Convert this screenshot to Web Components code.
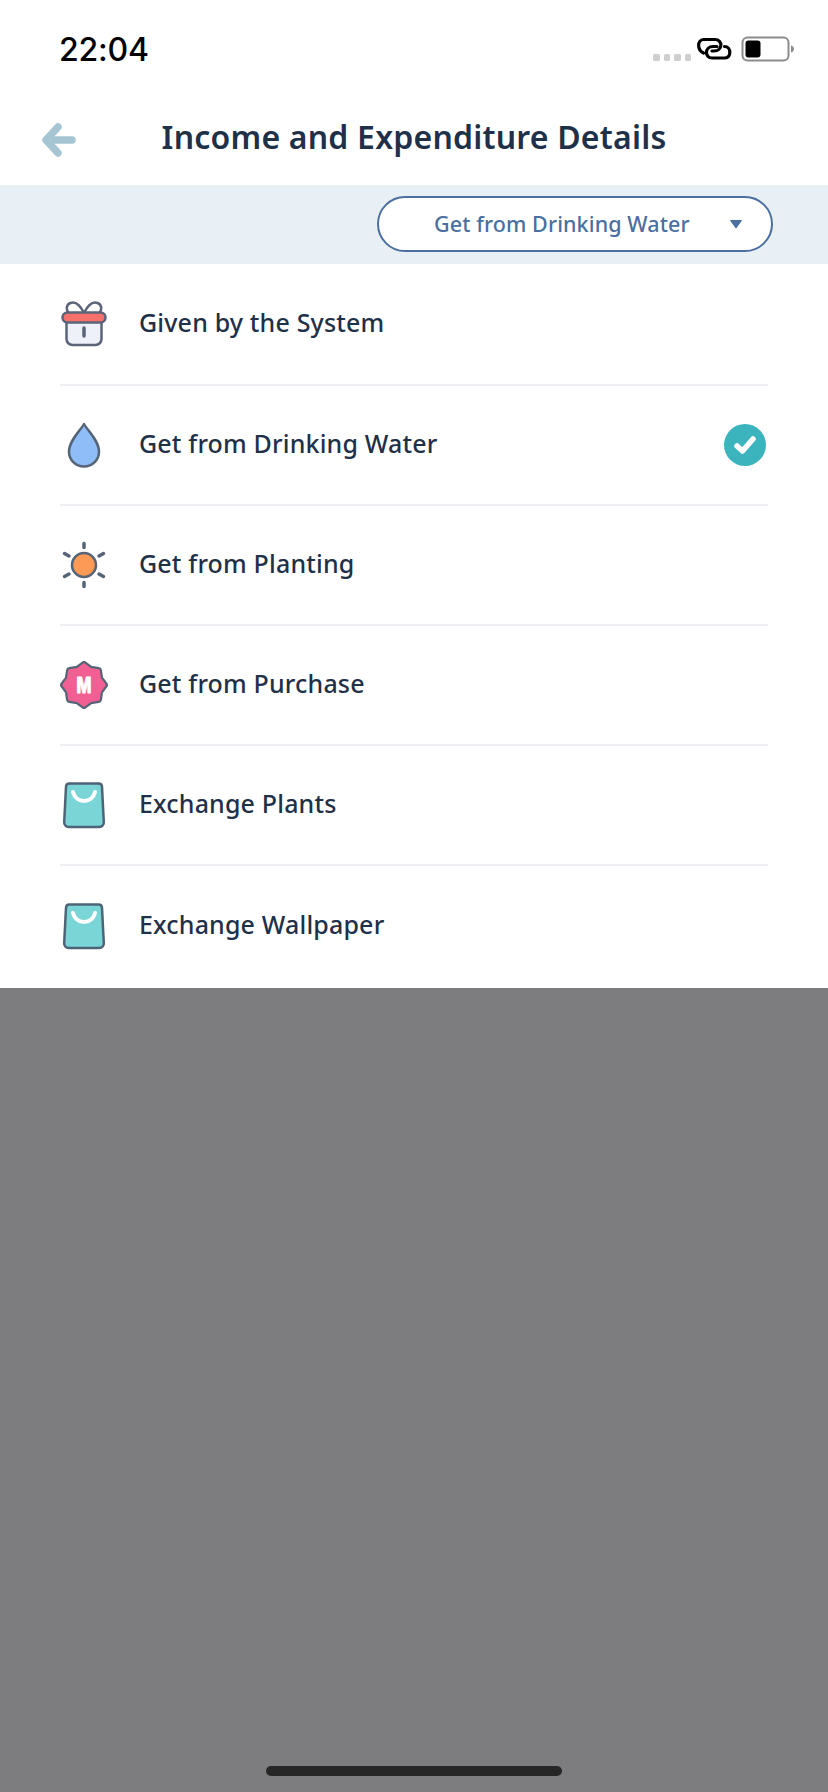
<!DOCTYPE html>
<html>
<head>
<meta charset="utf-8">
<title>Income and Expenditure Details</title>
<style>
  html, body { margin: 0; padding: 0; height: 100%; }
  body { font-family: "Noto Sans", sans-serif; background: #fff; }
</style>
</head>
<body>
<app-screen>
  <status-bar slot="top" time="22:04"></status-bar>
  <nav-header slot="top">Income and Expenditure Details</nav-header>
  <filter-bar slot="top">Get from Drinking Water</filter-bar>

  <ledger-row slot="top">
    <svg slot="icon" width="48" height="48" viewBox="0 0 48 48">
      <path d="M24 13C20 5 15 1.500 10.500 3C6 4.500 6 9.500 8.500 13M24 13C28 5 33 1.500 37.500 3C42 4.500 42 9.500 39.500 13" fill="#fff" stroke="#5b6478" stroke-width="2.500"/>
      <path d="M6.500 20V39a6 6 0 0 0 6 6h23a6 6 0 0 0 6-6V20z" fill="#eef0fa" stroke="#5b6478" stroke-width="2.500"/>
      <rect x="2.500" y="12.500" width="43" height="10" rx="5" fill="#f8706a" stroke="#5b6478" stroke-width="2.500"/>
      <path d="M24 28v8" stroke="#5b6478" stroke-width="3.500" stroke-linecap="round"/>
    </svg>
    Given by the System
  </ledger-row>
  <ledger-row slot="top" checked>
    <svg slot="icon" width="48" height="48" viewBox="0 0 48 48">
      <path d="M24 3C20 10 9 20 9 30.500C9 39 15.500 45.500 24 45.500S39 39 39 30.500C39 20 28 10 24 3z" fill="#8fbdf7" stroke="#566478" stroke-width="2.500" stroke-linejoin="round"/>
    </svg>
    Get from Drinking Water
  </ledger-row>
  <ledger-row slot="top">
    <svg slot="icon" width="48" height="48" viewBox="0 0 48 48">
      <circle cx="24" cy="24" r="12" fill="#fd9a55" stroke="#566478" stroke-width="2.500"/>
      <path d="M24 2.500v4M24 41.500v4M4.500 12.500l4.500 2.500M43.500 12.500l-4.500 2.500M4.500 35.500l4.500-2.500M43.500 35.500l-4.500-2.500" stroke="#566478" stroke-width="3.500" stroke-linecap="round"/>
    </svg>
    Get from Planting
  </ledger-row>
  <ledger-row slot="top">
    <svg slot="icon" width="48" height="48" viewBox="0 0 48 48">
      <polygon points="24,3.500 30.500,8.300 38.500,9.500 39.700,17.500 44.500,24 39.700,30.500 38.500,38.500 30.500,39.700 24,44.500 17.500,39.700 9.500,38.500 8.300,30.500 3.500,24 8.300,17.500 9.500,9.500 17.500,8.300" fill="#566478" stroke="#566478" stroke-width="7" stroke-linejoin="round"/>
      <polygon points="24,3.500 30.500,8.300 38.500,9.500 39.700,17.500 44.500,24 39.700,30.500 38.500,38.500 30.500,39.700 24,44.500 17.500,39.700 9.500,38.500 8.300,30.500 3.500,24 8.300,17.500 9.500,9.500 17.500,8.300" fill="#f25f93" stroke="#f25f93" stroke-width="2.500" stroke-linejoin="round"/>
      <text x="24" y="32" text-anchor="middle" font-family="Inter, sans-serif" font-weight="800" font-size="21" textLength="15" lengthAdjust="spacingAndGlyphs" fill="#fff" stroke="#fff" stroke-width="0.900" stroke-linejoin="round">M</text>
    </svg>
    Get from Purchase
  </ledger-row>
  <ledger-row slot="top">
    <svg slot="icon" width="48" height="48" viewBox="0 0 48 48">
      <path d="M9.500 2.500H38.500a3.500 3.500 0 0 1 3.500 3.300L43.800 41a4.500 4.500 0 0 1-4.500 5H8.700a4.500 4.500 0 0 1-4.500-5L6 5.800A3.500 3.500 0 0 1 9.500 2.500z" fill="#7ad5d6" stroke="#4d6478" stroke-width="2.500" stroke-linejoin="round"/>
      <path d="M13 11C16 23 32 23 35 11" fill="none" stroke="#fff" stroke-width="4" stroke-linecap="round"/>
    </svg>
    Exchange Plants
  </ledger-row>
  <ledger-row slot="top" last>
    <svg slot="icon" width="48" height="48" viewBox="0 0 48 48">
      <path d="M9.500 2.500H38.500a3.500 3.500 0 0 1 3.500 3.300L43.800 41a4.500 4.500 0 0 1-4.500 5H8.700a4.500 4.500 0 0 1-4.500-5L6 5.800A3.500 3.500 0 0 1 9.500 2.500z" fill="#7ad5d6" stroke="#4d6478" stroke-width="2.500" stroke-linejoin="round"/>
      <path d="M13 11C16 23 32 23 35 11" fill="none" stroke="#fff" stroke-width="4" stroke-linecap="round"/>
    </svg>
    Exchange Wallpaper
  </ledger-row>
</app-screen>

<script>
// page shell: white sheet on top, dimmed part with the home bar below
class AppScreen extends HTMLElement {
  constructor() {
    super();
    const shadowRoot = this.attachShadow({mode: 'open'});
    shadowRoot.innerHTML = `
      <style>
        :host { display: flex; flex-direction: column; height: 1792px; width: 828px; }
        .sheet { display: flex; flex-direction: column; height: 988px; background: #fff; }
        .dim { flex: 1; display: flex; align-items: flex-end; justify-content: center; background: #7d7d7f; padding-bottom: 16px; }
        .home { width: 296px; height: 10px; border-radius: 5px; background: #262626; }
      </style>
      <div class="sheet"><slot name="top"></slot></div>
      <div class="dim"><div class="home"></div></div>
    `;
  }
}

class StatusBar extends HTMLElement {
  constructor() {
    super();
    const shadowRoot = this.attachShadow({mode: 'open'});
    shadowRoot.innerHTML = `
      <style>
        :host { display: flex; align-items: center; justify-content: space-between; height: 98px; box-sizing: border-box; padding: 0 34px 0 59px; }
        .time { font: 500 32px/1 Inter, Roboto, sans-serif; color: #000; letter-spacing: -0.2px; margin-top: 2px; }
        .icons { display: flex; align-items: center; }
        .dots { display: flex; gap: 4px; margin: 17px 5px 0 0; }
        .dots i { width: 6.500px; height: 6.500px; border-radius: 1.500px; background: #cfcfcf; }
      </style>
      <span class="time"></span>
      <div class="icons">
        <div class="dots"><i></i><i></i><i></i><i></i></div>
        <svg width="37" height="24" viewBox="0 0 37 24" fill="none" stroke="#000" stroke-width="3.200" stroke-linecap="round" stroke-linejoin="round">
          <path d="M7.500 16C1 13 1 3 7.500 2.500H19C27 2.500 27 14 18 14H16"/>
          <path d="M28.500 9.500C35.500 9.500 35.500 21 29 21H16C8.500 21 8.500 9.500 17 9.500H21"/>
        </svg>
        <svg width="53" height="26" viewBox="0 0 53 26" style="margin-left:8px">
          <rect x="1.500" y="1.500" width="46" height="23" rx="5" fill="none" stroke="#8c8c8c" stroke-width="2"/>
          <rect x="4.500" y="4.500" width="15" height="17" rx="3" fill="#000"/>
          <path d="M50 9.500c2 .6 3 2 3 3.500s-1 2.900-3 3.500z" fill="#8c8c8c"/>
        </svg>
      </div>
    `;
    shadowRoot.querySelector('.time').textContent = this.getAttribute('time');
  }
}

class NavHeader extends HTMLElement {
  constructor() {
    super();
    const shadowRoot = this.attachShadow({mode: 'open'});
    shadowRoot.innerHTML = `
      <style>
        :host { display: grid; grid-template-columns: 100px 1fr 100px; align-items: center; height: 84px; padding-bottom: 3px; }
        svg { margin-left: 42px; }
        h1 { margin: 0 0 6px; text-align: center; font: 600 32px/1 "Noto Sans", sans-serif; color: #1f3049; letter-spacing: 0.2px; white-space: nowrap; }
      </style>
      <svg width="34" height="34" viewBox="0 0 34 34" fill="none" stroke="#a6c5d3" stroke-width="7.500" stroke-linecap="round" stroke-linejoin="round">
        <path d="M16 4L4 17L16 30M5 17H30"/>
      </svg>
      <h1><slot></slot></h1>
    `;
  }
}

class FilterBar extends HTMLElement {
  constructor() {
    super();
    const shadowRoot = this.attachShadow({mode: 'open'});
    shadowRoot.innerHTML = `
      <style>
        :host { display: flex; justify-content: flex-end; align-items: center; height: 79px; background: #e8eff5; padding-right: 55px; }
        .pill { display: flex; align-items: center; justify-content: space-between; box-sizing: border-box; width: 396px; height: 56px; margin-top: -1px; padding: 0 28px 0 55px; background: #fff; border: 2px solid #4a6fa0; border-radius: 28px; }
        span { font: 500 21.500px/1 "Noto Sans", sans-serif; color: #4a6fa0; letter-spacing: 0.1px; white-space: nowrap; }
      </style>
      <div class="pill">
        <span><slot></slot></span>
        <svg width="14" height="10" viewBox="0 0 14 10"><path d="M1.500 1.500H12.500L7 9z" fill="#4a6fa0" stroke="#4a6fa0" stroke-linejoin="round"/></svg>
      </div>
    `;
  }
}

class LedgerRow extends HTMLElement {
  constructor() {
    super();
    const shadowRoot = this.attachShadow({mode: 'open'});
    shadowRoot.innerHTML = `
      <style>
        :host { display: flex; align-items: center; gap: 31px; height: 120px; box-sizing: border-box; margin: 0 60px; padding-right: 2px; border-bottom: 2px solid #eeeff5; font: 500 25px/1 "Noto Sans", sans-serif; color: #1f3049; letter-spacing: 0.17px; white-space: nowrap; }
        :host(:first-of-type) { height: 122px; }
        :host([last]) { border-bottom: 0; }
        .label { flex: 1; margin-bottom: 3px; }
        .icon { display: flex; width: 48px; height: 48px; margin-bottom: 1px; }
      </style>
      <div class="icon"><slot name="icon"></slot></div>
      <div class="label"><slot></slot></div>
    `;
    if (this.hasAttribute('checked')) {
      const tick = document.createElementNS('http://www.w3.org/2000/svg', 'svg');
      tick.setAttribute('width', '42');
      tick.setAttribute('height', '42');
      tick.setAttribute('viewBox', '0 0 42 42');
      tick.innerHTML = `<circle cx="21" cy="21" r="21" fill="#3cb4bd"/>
        <path d="M13 22L18.500 27L29 15" fill="none" stroke="#fff" stroke-width="5.500" stroke-linecap="round" stroke-linejoin="round"/>`;
      shadowRoot.appendChild(tick);
    }
  }
}

customElements.define('app-screen', AppScreen);
customElements.define('status-bar', StatusBar);
customElements.define('nav-header', NavHeader);
customElements.define('filter-bar', FilterBar);
customElements.define('ledger-row', LedgerRow);
</script>
</body>
</html>
